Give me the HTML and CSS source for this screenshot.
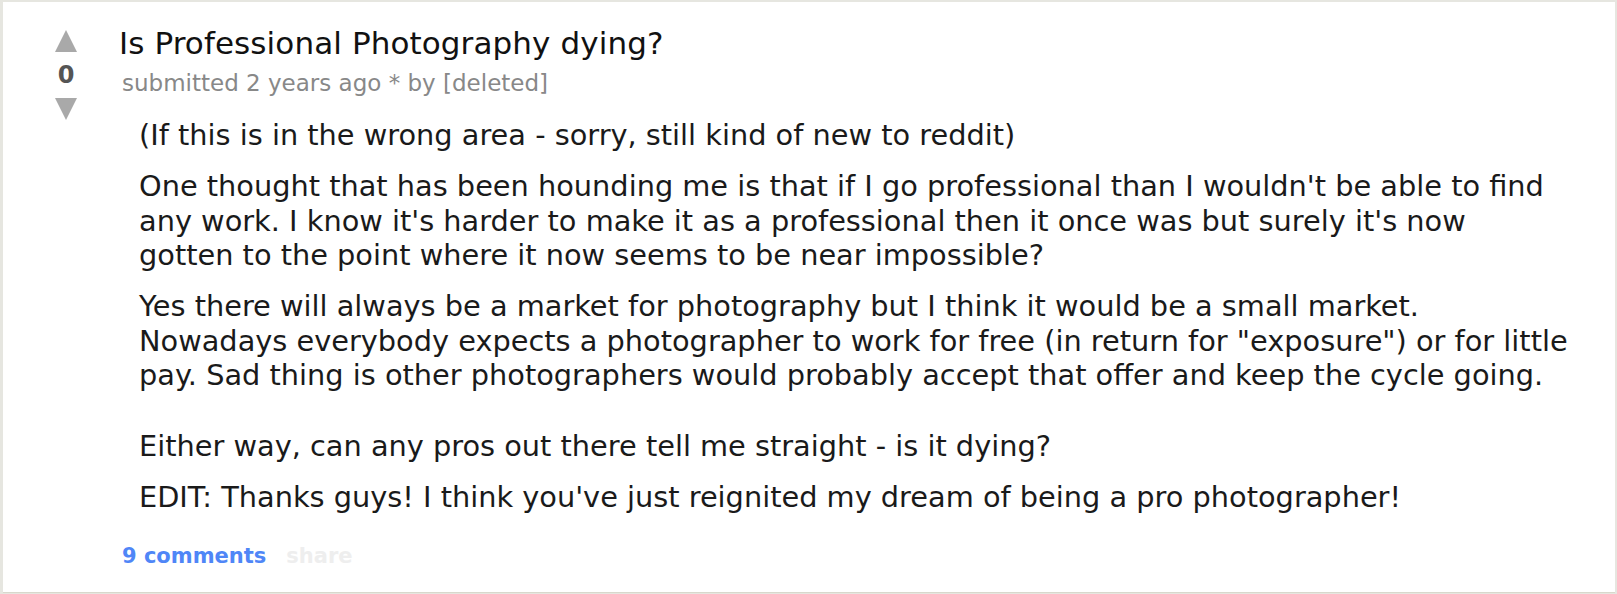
FILE: index.html
```html
<!DOCTYPE html>
<html lang="en">
<head>
<meta charset="utf-8">
<title>Is Professional Photography dying?</title>
<link rel="stylesheet" href="styles.css">
</head>
<body>
<div class="card">
  <div class="vote">
    <div class="arrow up"></div>
    <div class="score">0</div>
    <div class="arrow down"></div>
  </div>
  <div class="entry">
    <p class="title">Is Professional Photography dying?</p>
    <p class="tagline">submitted 2 years ago * by [deleted]</p>
    <div class="usertext">
      <p>(If this is in the wrong area - sorry, still kind of new to reddit)</p>
      <p>One thought that has been hounding me is that if I go professional than I wouldn't be able to find<br>any work. I know it's harder to make it as a professional then it once was but surely it's now<br>gotten to the point where it now seems to be near impossible?</p>
      <p>Yes there will always be a market for photography but I think it would be a small market.<br>Nowadays everybody expects a photographer to work for free (in return for "exposure") or for little<br>pay. Sad thing is other photographers would probably accept that offer and keep the cycle going.</p>
      <p class="spaced">Either way, can any pros out there tell me straight - is it dying?</p>
      <p>EDIT: Thanks guys! I think you've just reignited my dream of being a pro photographer!</p>
    </div>
    <ul class="buttons">
      <li class="comments">9 comments</li>
      <li class="share">share</li>
    </ul>
  </div>
</div>
</body>
</html>
```
FILE: styles.css
```css
html, body {
  margin: 0;
  padding: 0;
}

body {
  background: #e6e6e0;
  padding: 2px 2px 2px 3px;
  font-family: "DejaVu Sans", Verdana, sans-serif;
}

.card {
  background: #ffffff;
  height: 590px;
  display: flex;
  align-items: flex-start;
  box-shadow: 0 1px 0 #d8d8cc;
}

.vote {
  width: 22px;
  margin-left: 52px;
  padding-top: 28px;
  display: flex;
  flex-direction: column;
  align-items: center;
}

.arrow {
  width: 0;
  height: 0;
  border-left: 11px solid transparent;
  border-right: 11px solid transparent;
}

.arrow.up {
  border-bottom: 22px solid #a9a9a9;
}

.arrow.down {
  border-top: 22px solid #a9a9a9;
}

.score {
  margin: 11px 0;
  font-weight: bold;
  font-size: 24px;
  line-height: 24px;
  color: #555555;
}

.entry {
  margin-left: 42px;
  padding-top: 21px;
  flex: 1;
  min-width: 0;
}

.title {
  margin: 2px 0 0 0;
  font-size: 31px;
  line-height: 37px;
  letter-spacing: 0.1px;
  color: #111111;
}

.tagline {
  margin: 6px 0 0 3px;
  font-size: 23px;
  line-height: 30px;
  color: #888888;
}

.usertext {
  margin: 20px 0 0 20px;
  font-size: 28.8px;
  line-height: 34.5px;
  white-space: nowrap;
  color: #1a1a1a;
}

.usertext p {
  margin: 0 0 16.5px 0;
}

.usertext p.spaced {
  margin-top: 36.5px;
}

.usertext p:last-child {
  margin-bottom: 0;
}

.buttons {
  list-style: none;
  margin: 29px 0 0 3px;
  padding: 0;
  display: flex;
  gap: 20px;
  font-weight: bold;
  font-size: 21px;
  line-height: 24px;
}

.comments {
  color: #4f86f7;
}

.share {
  color: #eeeeee;
}
```
